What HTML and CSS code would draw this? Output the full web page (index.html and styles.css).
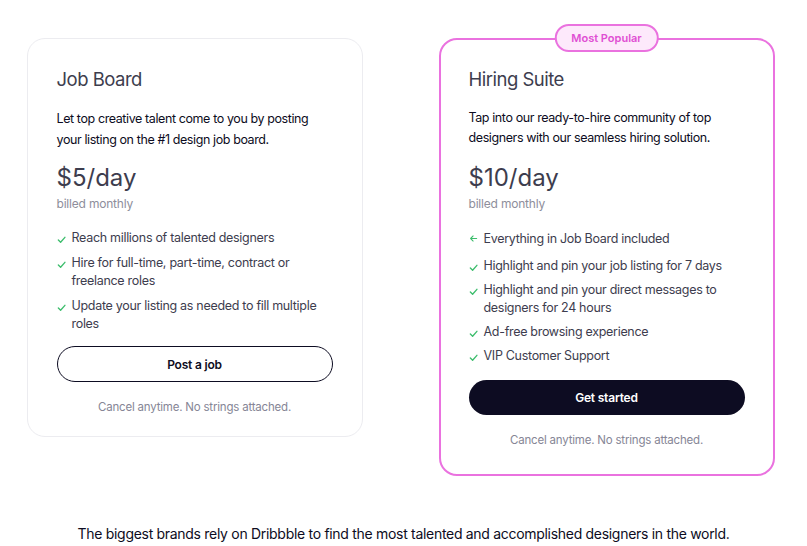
FILE: index.html
```html
<!DOCTYPE html>
<html lang="en">
<head>
<meta charset="utf-8">
<title>Pricing</title>
<link rel="stylesheet" href="styles.css">
</head>
<body>
<main class="page">
  <section class="plans">
    <article class="card">
      <h2 class="title">Job Board</h2>
      <p class="desc">Let top creative talent come to you by posting your listing on the #1 design job board.</p>
      <div class="price">$5/day</div>
      <div class="billed">billed monthly</div>
      <ul class="features">
        <li><svg class="ico" viewBox="0 0 10 10"><path d="M1.5 5.6 L4 8 L8.8 2.6" /></svg><span>Reach millions of talented designers</span></li>
        <li><svg class="ico" viewBox="0 0 10 10"><path d="M1.5 5.6 L4 8 L8.8 2.6" /></svg><span>Hire for full-time, part-time, contract or freelance roles</span></li>
        <li><svg class="ico" viewBox="0 0 10 10"><path d="M1.5 5.6 L4 8 L8.8 2.6" /></svg><span>Update your listing as needed to fill multiple roles</span></li>
      </ul>
      <button class="btn btn-outline">Post a job</button>
      <p class="cancel">Cancel anytime. No strings attached.</p>
    </article>
    <article class="card card-popular">
      <div class="badge">Most Popular</div>
      <h2 class="title">Hiring Suite</h2>
      <p class="desc desc-tight">Tap into our ready-to-hire community of top designers with our seamless hiring solution.</p>
      <div class="price price-tight">$10/day</div>
      <div class="billed">billed monthly</div>
      <ul class="features features-wide">
        <li class="first-item"><svg class="ico ico-arrow" viewBox="0 0 10 10"><path d="M8.5 5 H1.8 M4.6 2.2 L1.8 5 L4.6 7.8" /></svg><span>Everything in Job Board included</span></li>
        <li><svg class="ico" viewBox="0 0 10 10"><path d="M1.5 5.6 L4 8 L8.8 2.6" /></svg><span>Highlight and pin your job listing for 7 days</span></li>
        <li><svg class="ico" viewBox="0 0 10 10"><path d="M1.5 5.6 L4 8 L8.8 2.6" /></svg><span>Highlight and pin your direct messages to designers for 24 hours</span></li>
        <li><svg class="ico" viewBox="0 0 10 10"><path d="M1.5 5.6 L4 8 L8.8 2.6" /></svg><span>Ad-free browsing experience</span></li>
        <li><svg class="ico" viewBox="0 0 10 10"><path d="M1.5 5.6 L4 8 L8.8 2.6" /></svg><span>VIP Customer Support</span></li>
      </ul>
      <button class="btn btn-dark">Get started</button>
      <p class="cancel">Cancel anytime. No strings attached.</p>
    </article>
  </section>
  <p class="brands">The biggest brands rely on Dribbble to find the most talented and accomplished designers in the world.</p>
</main>
</body>
</html>
```
FILE: styles.css
```css
* { box-sizing: border-box; }
html, body { margin: 0; padding: 0; background: #ffffff; }
body {
  font-family: "Inter", "Roboto", "Liberation Sans", sans-serif;
  color: #0d0c22;
}
.page {
  display: flex;
  flex-direction: column;
  align-items: center;
  padding-top: 38px;
}
.plans {
  display: flex;
  align-items: flex-start;
  gap: 76px;
  margin-left: -6px;
}
.card {
  position: relative;
  width: 336px;
  border: 1px solid #ececf0;
  border-radius: 18px;
  padding: 29px 29px 21px 29px;
  display: flex;
  flex-direction: column;
}
.card-popular {
  border: 2px solid #ea72df;
  padding: 28px 28px 26px 28px;
}
.badge {
  position: absolute;
  top: -16px;
  left: 50%;
  transform: translateX(-50%);
  height: 28px;
  padding: 0 15px;
  border: 2px solid #ea72df;
  background: #fde9fb;
  color: #e04fd3;
  border-radius: 14px;
  font-size: 11px;
  font-weight: 600;
  display: flex;
  align-items: center;
  white-space: nowrap;
}
.title {
  margin: 0;
  font-size: 18.5px;
  line-height: 22px;
  font-weight: 400;
  color: #3d3d4e;
  letter-spacing: -0.5px;
}
.desc {
  margin: 18px 0 0;
  font-size: 12.5px;
  line-height: 21px;
  color: #0d0c22;
  letter-spacing: -0.4px;
}
.desc-tight { line-height: 20px; }
.price {
  margin-top: 13px;
  font-size: 24px;
  line-height: 30px;
  color: #3d3d4e;
  letter-spacing: 0;
}
.price-tight { margin-top: 15px; }
.billed {
  margin-top: 3px;
  font-size: 12px;
  line-height: 16px;
  color: #8e8e9b;
  letter-spacing: -0.2px;
}
.features {
  list-style: none;
  margin: 17px 0 0;
  padding: 0;
  display: flex;
  flex-direction: column;
  gap: 7px;
}
.features li {
  display: flex;
  align-items: flex-start;
  gap: 6px;
  font-size: 12.5px;
  line-height: 18px;
  color: #3d3d4e;
  letter-spacing: -0.3px;
}
.ico {
  flex: none;
  width: 9px;
  height: 9px;
  margin-top: 6px;
  fill: none;
  stroke: #3cbd6c;
  stroke-width: 1.5;
  stroke-linecap: round;
  stroke-linejoin: round;
}
.ico-arrow { margin-top: 4px; stroke-width: 1.2; }
.features-wide { gap: 6px; margin-top: 18px; }
.features-wide .first-item { margin-bottom: 3px; }
.btn {
  margin-top: 13px;
  height: 36px;
  width: 100%;
  border-radius: 18px;
  font-family: inherit;
  font-size: 12px;
  font-weight: 600;
  letter-spacing: -0.2px;
  cursor: pointer;
}
.btn-outline {
  background: #ffffff;
  border: 1px solid #0d0c22;
  color: #0d0c22;
}
.btn-dark {
  background: #0d0c22;
  border: none;
  color: #ffffff;
  margin-top: 15px;
  height: 35px;
}
.cancel {
  margin: 17px 0 0;
  text-align: center;
  font-size: 11.5px;
  line-height: 16px;
  color: #868696;
  letter-spacing: -0.2px;
}
.brands {
  margin: 49px 0 0;
  font-size: 14px;
  line-height: 18px;
  color: #0d0c22;
  letter-spacing: -0.3px;
}
```
